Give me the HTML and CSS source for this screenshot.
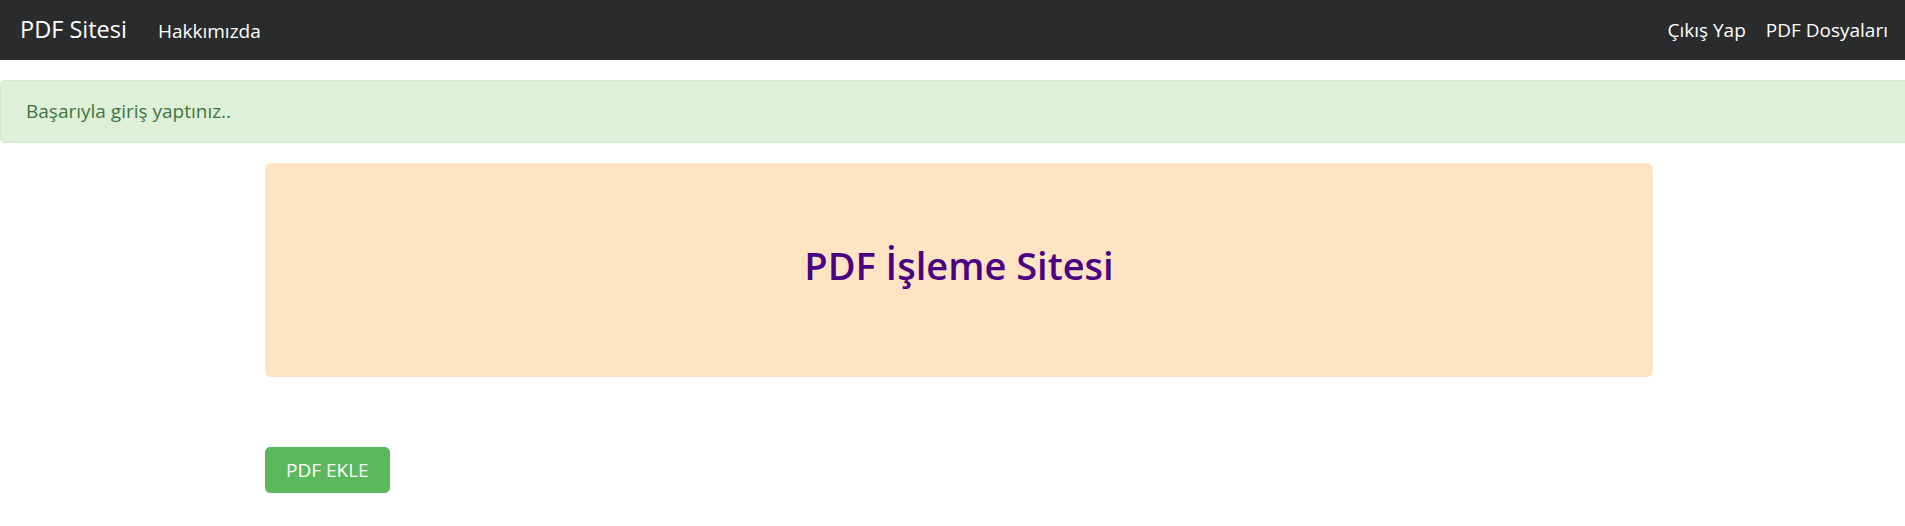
FILE: index.html
```html
<!DOCTYPE html>
<html lang="tr">
<head>
<meta charset="utf-8">
<title>PDF Sitesi</title>
<link rel="stylesheet" href="styles.css">
</head>
<body>
<nav class="navbar">
  <div class="nav-left">
    <a class="brand" href="#">PDF Sitesi</a>
    <a class="nav-link" href="#">Hakkımızda</a>
  </div>
  <div class="nav-right">
    <a class="nav-link" href="#">Çıkış Yap</a>
    <a class="nav-link" href="#">PDF Dosyaları</a>
  </div>
</nav>
<div class="alert">Başarıyla giriş yaptınız..</div>
<main class="container">
  <div class="jumbotron">
    <h2 class="title">PDF İşleme Sitesi</h2>
  </div>
  <div class="actions">
    <a class="btn-success" href="#">PDF EKLE</a>
  </div>
</main>
</body>
</html>
```
FILE: styles.css
```css
* { box-sizing: border-box; }
html, body { margin: 0; padding: 0; background: #fff; }
body {
  font-family: "Open Sans", "Noto Sans", "Liberation Sans", sans-serif;
  color: #292b2c;
  overflow-x: hidden;
}
a { text-decoration: none; }

.navbar {
  height: 60px;
  background: #292b2c;
  display: flex;
  align-items: center;
  justify-content: space-between;
  padding: 0 17px 0 20px;
}
.nav-left, .nav-right {
  display: flex;
  align-items: baseline;
}
.nav-right { gap: 20px; }
.brand {
  color: #fff;
  font-size: 23.5px;
  line-height: 30px;
  margin-right: 31px;
}
.nav-link {
  color: #fff;
  font-size: 19px;
  line-height: 30px;
}

.alert {
  width: calc(100% + 20px);
  margin: 20px 0 20px;
  padding: 15px 25px;
  background: #dff0d8;
  border: 1px solid #d0e9c6;
  border-radius: 5px;
  color: #3c763d;
  font-size: 19px;
  line-height: 31px;
}

.container {
  width: 1388px;
  margin-left: 265px;
}
.jumbotron {
  background: #ffe4c4;
  border-radius: 6px;
  padding: 80px 40px;
}
.title {
  margin: 0 0 10px;
  text-align: center;
  color: #4b0082;
  font-size: 38px;
  line-height: 44px;
  font-weight: 600;
}
.actions {
  padding-top: 70px;
}
.btn-success {
  display: inline-block;
  background: #5cb85c;
  border: 1px solid #5cb85c;
  border-radius: 5px;
  color: #fff;
  font-size: 19px;
  line-height: 24px;
  padding: 10px 20px;
}
```
